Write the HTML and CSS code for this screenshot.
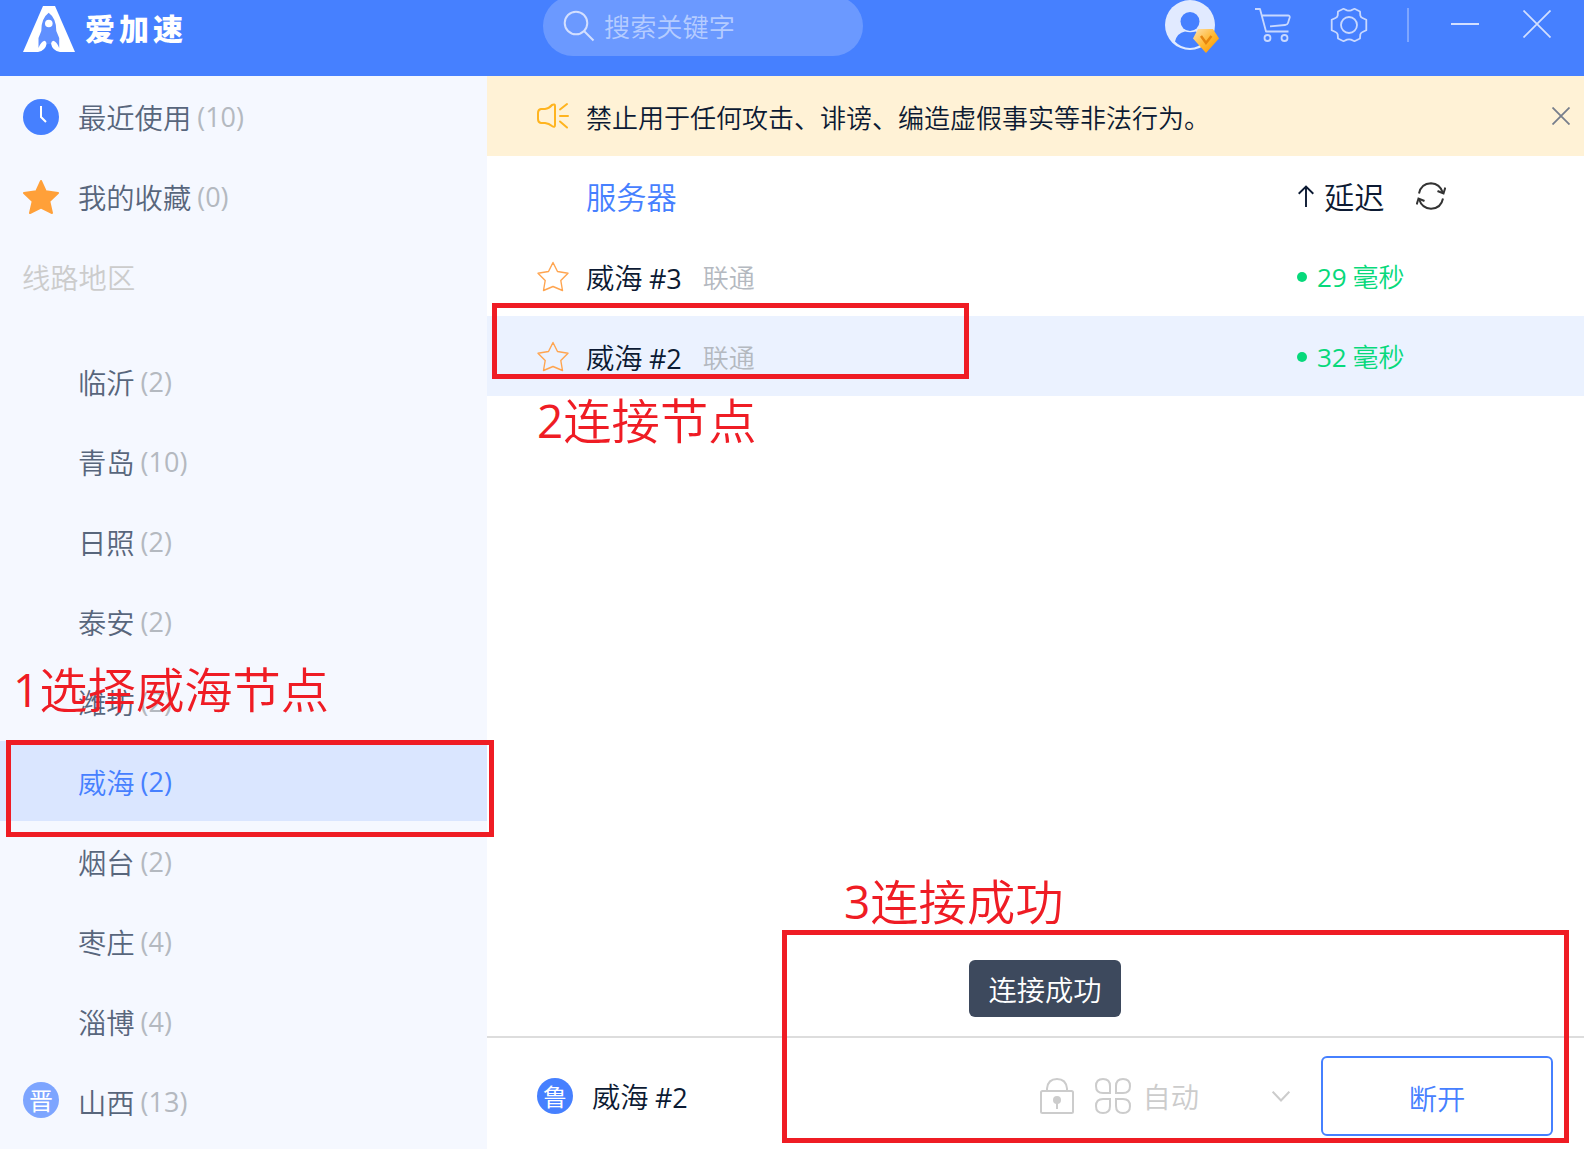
FILE: index.html
```html
<!DOCTYPE html>
<html lang="zh-CN">
<head>
<meta charset="utf-8">
<title>爱加速</title>
<link rel="stylesheet" href="styles.css">
</head>
<body>
<div class="app">
  <header class="topbar">
    <div class="brand">
      <svg class="brand-mark" width="52" height="46" viewBox="0 0 52 46">
        <path fill="#fff" d="M20 0H32L52 46H0Z"/>
        <path fill="#4680ff" d="M15 46Q22.500 44.500 23.700 37.500H28Q29.200 44.500 37 46Z"/>
        <path fill="#6090ff" d="M25.700 6.700Q18 12.500 18.300 25L15.500 32V42Q18 35.500 21.500 34.800Q23.300 35 23.700 38H28Q28.400 35 30.200 34.800Q33.700 35.500 36.200 42V32L33.300 25Q33.500 12.500 25.700 6.700Z"/>
        <circle cx="25.800" cy="17.500" r="3.800" fill="#fff"/>
      </svg>
      <span class="brand-name">爱加速</span>
    </div>
    <div class="search">
      <svg width="32" height="32" viewBox="0 0 32 32" fill="none" stroke="#d3dfff" stroke-width="2">
        <circle cx="13" cy="13" r="11.300"/><path d="M21 21L30.500 30.500"/>
      </svg>
      <span>搜索关键字</span>
    </div>
    <div class="tools">
      <svg class="avatar" width="56" height="54" viewBox="0 0 56 54">
        <defs><linearGradient id="gem" x1="0" y1="0" x2="1" y2="1"><stop offset="0" stop-color="#ffe3b0"/><stop offset=".55" stop-color="#ffb52b"/><stop offset="1" stop-color="#f98e00"/></linearGradient></defs>
        <circle cx="25" cy="25" r="25" fill="#e1eaff"/>
        <circle cx="25" cy="21.500" r="9.500" fill="#4680ff"/>
        <path fill="#4680ff" d="M10 41.500Q12 33 20 31.500Q25 33 31 31.500L40 40Q34 48 25 48Q16 48 10 41.500Z"/>
        <path fill="url(#gem)" d="M33 29H48L54 38.500L41 53L28 38.500Z"/>
        <path d="M36 36L41 43L46.500 36" fill="none" stroke="#e5850f" stroke-width="2.500"/>
      </svg>
      <svg class="cart" width="36" height="35" viewBox="0 0 36 35" fill="none" stroke="#c8d8ff" stroke-width="1.800" stroke-linejoin="round">
        <path d="M0 1H5L11 23.500H33.500M7 7.500H33Q35 7.500 34.700 9.500L33 15Q32.500 16.800 30 17L15 18.300"/>
        <circle cx="12.500" cy="30" r="3"/><circle cx="29.500" cy="30" r="3"/>
      </svg>
      <svg class="gear" width="38" height="36" viewBox="-19 -18 38 36" fill="none" stroke="#c8d8ff" stroke-width="1.800" stroke-linejoin="round">
        <path d="M-5.500 -16.200L-2 -14.600Q0 -14 2 -14.600L5.500 -16.200L11 -13.500L11.300 -9.500Q11.800 -7.600 13.500 -7L17.300 -5.200V5.200L13.500 7Q11.800 7.600 11.300 9.500L11 13.500L5.500 16.200L2 14.600Q0 14 -2 14.600L-5.500 16.200L-11 13.500L-11.300 9.500Q-11.800 7.600 -13.500 7L-17.300 5.200V-5.200L-13.500 -7Q-11.800 -7.600 -11.300 -9.500L-11 -13.500Z"/>
        <circle r="8"/>
      </svg>
      <span class="rule"></span>
      <span class="minimize"></span>
      <svg class="close" width="28" height="28" viewBox="0 0 28 28" stroke="#d3dfff" stroke-width="1.700"><path d="M.5 .5L27.500 27.500M27.500 .5L.5 27.500"/></svg>
    </div>
  </header>

  <div class="body">
    <nav class="sidebar">
      <div class="item">
        <svg class="item-icon" width="36" height="36" viewBox="0 0 36 36"><circle cx="18" cy="18" r="18" fill="#4680ff"/><path d="M18 7V18L23 23" fill="none" stroke="#fff" stroke-width="2"/></svg>
        <span>最近使用</span><span class="count">(10)</span>
      </div>
      <div class="item">
        <svg class="item-icon" width="36" height="36" viewBox="0 0 36 36"><path fill="#ffa039" stroke="#ffa039" stroke-width="2" stroke-linejoin="round" d="M18 2L22.800 12.300L35 14L26.300 22.300L29 34L18 28.500L7 34L9.700 22.300L1 14L13.200 12.300Z"/></svg>
        <span>我的收藏</span><span class="count">(0)</span>
      </div>
      <div class="group-title">线路地区</div>
      <div class="item sub"><span>临沂</span><span class="count">(2)</span></div>
      <div class="item sub"><span>青岛</span><span class="count">(10)</span></div>
      <div class="item sub"><span>日照</span><span class="count">(2)</span></div>
      <div class="item sub"><span>泰安</span><span class="count">(2)</span></div>
      <div class="item sub"><span>潍坊</span><span class="count">(2)</span></div>
      <div class="item sub active"><span>威海</span><span class="count">(2)</span></div>
      <div class="item sub"><span>烟台</span><span class="count">(2)</span></div>
      <div class="item sub"><span>枣庄</span><span class="count">(4)</span></div>
      <div class="item sub"><span>淄博</span><span class="count">(4)</span></div>
      <div class="item"><span class="item-icon province">晋</span><span>山西</span><span class="count">(13)</span></div>
    </nav>

    <main class="main">
      <div class="notice">
        <svg class="lead" width="32" height="28" viewBox="0 0 32 28" fill="none" stroke="#ffb41f" stroke-width="2" stroke-linejoin="round" stroke-linecap="round">
          <path d="M4 7H8Q12 6.500 15 3Q18 1.500 18 4V23Q18 26 15 24Q12 21.500 8 21H4Q1 20.500 1 17V11Q1 7.500 4 7Z"/><path d="M23 7.500L30 2M23 14H31M23 19.500L30 25.500"/>
        </svg>
        <span class="notice-text">禁止用于任何攻击、诽谤、编造虚假事实等非法行为。</span>
        <svg class="dismiss" width="18" height="18" viewBox="0 0 18 18" stroke="#777e8c" stroke-width="1.800"><path d="M.5 .5L17.500 17.500M17.500 .5L.5 17.500"/></svg>
      </div>
      <div class="row head">
        <span class="col-server">服务器</span>
        <div class="col-delay">
          <svg class="sort" width="16" height="22" viewBox="0 0 16 22" fill="none" stroke="#0c1a33" stroke-width="1.900"><path d="M8 22V1.500M.7 8.700L8 1.500L15.300 8.700"/></svg>
          <span>延迟</span>
          <svg class="refresh" width="30" height="28" viewBox="0 0 30 28" fill="none" stroke="#333" stroke-width="2"><path d="M3 11.500Q5 1.500 15 1.200Q24 1.500 27 11M27 16.500Q25 26.500 15 26.700Q6 26.500 3 17"/><path d="M21.500 9L27.500 11.500L29.300 5.500M.7 22.500L2.500 16.500L8.500 19"/></svg>
        </div>
      </div>
      <div class="row">
        <svg class="lead" width="32" height="31" viewBox="0 0 32 31"><path class="star" d="M16 1.500L20.500 10.500L31 12.200L23.800 19.500L25.500 29.500L16 25.500L6.500 29.500L8.200 19.500L1 12.200L11.500 10.500Z"/></svg>
        <span class="name">威海 <span class="latin">#3</span></span><span class="isp">联通</span>
        <div class="col-delay ok"><i class="dot"></i><span><span class="latin">29</span> 毫秒</span></div>
      </div>
      <div class="row selected">
        <svg class="lead" width="32" height="31" viewBox="0 0 32 31"><path class="star" d="M16 1.500L20.500 10.500L31 12.200L23.800 19.500L25.500 29.500L16 25.500L6.500 29.500L8.200 19.500L1 12.200L11.500 10.500Z"/></svg>
        <span class="name">威海 <span class="latin">#2</span></span><span class="isp">联通</span>
        <div class="col-delay ok"><i class="dot"></i><span><span class="latin">32</span> 毫秒</span></div>
      </div>
      <footer class="statusbar">
        <span class="province current">鲁</span>
        <span class="status-name">威海 <span class="latin">#2</span></span>
        <div class="mode">
          <svg width="34" height="36" viewBox="0 0 34 36" fill="none" stroke="#ccc" stroke-width="2"><rect x="1" y="13" width="32" height="22" rx="1.500"/><path d="M7 13V10.500Q8 1 17 1Q26 1 27 10.500V13"/><circle cx="17" cy="22" r="4" fill="#ccc" stroke="none"/><path d="M17 22V31"/></svg>
          <svg width="36" height="36" viewBox="0 0 36 36" fill="none" stroke="#ccc" stroke-width="2"><path d="M15 15H8Q1 15 1 8Q1 1 8 1Q15 1 15 8ZM21 15V8Q21 1 28 1Q35 1 35 8Q35 15 28 15ZM15 21H8Q1 21 1 28Q1 35 8 35Q15 35 15 28ZM21 21V28Q21 35 28 35Q35 35 35 28Q35 21 28 21Z"/></svg>
          <span class="mode-name">自动</span>
          <svg class="chevron" width="18" height="11" viewBox="0 0 18 11" fill="none" stroke="#ccc" stroke-width="2"><path d="M.7 .7L9 9.500L17.300 .7"/></svg>
        </div>
        <button class="disconnect">断开</button>
      </footer>
    </main>
  </div>

  <div class="toast">连接成功</div>
  <div class="mark mark-region"></div>
  <div class="mark mark-server"></div>
  <div class="mark mark-status"></div>
  <div class="note note-region"><span class="latin">1</span>选择威海节点</div>
  <div class="note note-server"><span class="latin">2</span>连接节点</div>
  <div class="note note-status"><span class="latin">3</span>连接成功</div>
</div>
</body>
</html>
```
FILE: styles.css
```css
* { box-sizing: border-box; }
body {
  margin: 0;
  font-family: "Noto Sans CJK SC", sans-serif;
  font-weight: 350;
  font-size: 28.3px;
  color: #0c1a33;
  background: #fff;
}
svg { display: block; flex: none; }
.app {
  position: relative;
  width: 1584px;
  height: 1149px;
  overflow: hidden;
  display: flex;
  flex-direction: column;
  white-space: nowrap;
}
.latin, .count { font-family: "Open Sans", "Noto Sans", sans-serif; font-weight: 400; }

.topbar {
  height: 76px;
  flex: none;
  display: flex;
  align-items: flex-start;
  background: #4680ff;
}
.brand { width: 543px; display: flex; padding: 6px 0 0 23px; gap: 10px; }
.brand-name { font-size: 30px; line-height: 43px; font-weight: 900; letter-spacing: 4px; color: #fff; }
.search {
  width: 320px;
  height: 60px;
  margin-top: -4px;
  padding: 0 20px;
  border-radius: 30px;
  display: flex;
  align-items: center;
  gap: 9px;
  background: #6b99ff;
  color: #b5ccff;
  font-size: 26.2px;
}
.tools { display: flex; align-items: flex-start; margin-left: 302px; }
.cart { margin: 8px 0 0 34px; }
.gear { margin: 7px 0 0 39px; }
.rule { width: 2px; height: 34px; margin: 8px 0 0 39px; background: #7ea6ff; }
.minimize { width: 28px; height: 2px; margin: 23px 0 0 42px; background: #d3dfff; }
.close { margin: 10px 0 0 44px; }

.body { flex: 1; display: flex; min-height: 0; }
.sidebar { width: 487px; flex: none; background: #f5f8ff; }
.item {
  height: 80px;
  padding: 0 0 0 23px;
  display: flex;
  align-items: center;
  color: #58667c;
}
.item-icon { margin: 1px 19px 0 0; }
.item.sub { padding-left: 78px; }
.count { margin: 1px 0 0 6px; font-size: 27px; color: #b4b9c0; }
.item.active { background: #dae6ff; color: #4680ff; }
.item.active .count { color: #4680ff; }
.group-title { height: 105px; padding-left: 22px; line-height: 81px; color: #ccc; }
.province {
  width: 36px;
  height: 36px;
  flex: none;
  border-radius: 50%;
  background: #7da5ff;
  color: #fff;
  font-size: 24px;
  font-weight: 400;
  line-height: 35px;
  text-align: center;
}
.item .province { margin-top: -2px; }
.province.current { background: #4680ff; }

.main { flex: 1; display: flex; flex-direction: column; }
.notice, .row { height: 80px; display: flex; align-items: center; padding-left: 50px; }
.notice { background: #fff2d6; font-size: 26px; }
.lead { margin-right: 17px; }
.dismiss { margin-left: auto; margin-right: 14px; }
.head { font-size: 30.3px; padding-left: 99px; }
.col-server { color: #4680ff; }
.col-delay { width: 287px; margin-left: auto; display: flex; align-items: center; }
.head .col-delay { width: 286px; }
.sort { margin-right: 10px; }
.refresh { margin-left: 31px; }
.star { fill: none; stroke: #ffa550; stroke-width: 1.4; stroke-linejoin: round; }
.name .latin, .status-name .latin { font-size: 27px; }
.isp { margin-left: 21px; font-size: 26px; color: #b4b9c0; }
.ok { font-size: 26px; color: #07d97b; }
.dot { width: 10px; height: 10px; margin: 2px 10px 0 0; border-radius: 50%; background: #07d97b; }
.selected { background: #ebf2ff; }

.statusbar {
  height: 113px;
  margin-top: auto;
  border-top: 2px solid #ddd;
  padding: 4px 31px 0 50px;
  display: flex;
  align-items: center;
}
.status-name { margin-left: 19px; }
.mode { margin-left: auto; display: flex; align-items: center; color: #ccc; }
.mode > svg + svg { margin-left: 21px; }
.mode-name { margin-left: 11px; }
.mode > .chevron { margin: 2px 31px 0 73px; }
.disconnect {
  width: 232px;
  height: 80px;
  border: 2px solid #4680ff;
  border-radius: 6px;
  padding: 4px 0 0;
  background: #fff;
  color: #4680ff;
  font: inherit;
}

.toast {
  position: absolute;
  left: 969px;
  top: 960px;
  width: 152px;
  height: 57px;
  border-radius: 6px;
  background: #3d495d;
  color: #fff;
  line-height: 58px;
  text-align: center;
}
.mark { position: absolute; border: 5px solid #ef1c24; }
.mark-region { left: 6px; top: 740px; width: 488px; height: 97px; }
.mark-server { left: 492px; top: 303px; width: 477px; height: 76px; }
.mark-status { left: 782px; top: 930px; width: 787px; height: 213px; }
.note { position: absolute; font-size: 48.3px; line-height: 60px; color: #ef1c24; }
.note .latin { font-size: 46px; position: relative; top: -1px; }
.note-region { left: 13px; top: 657px; }
.note-server { left: 537px; top: 388px; }
.note-status { left: 844px; top: 869px; }
```
